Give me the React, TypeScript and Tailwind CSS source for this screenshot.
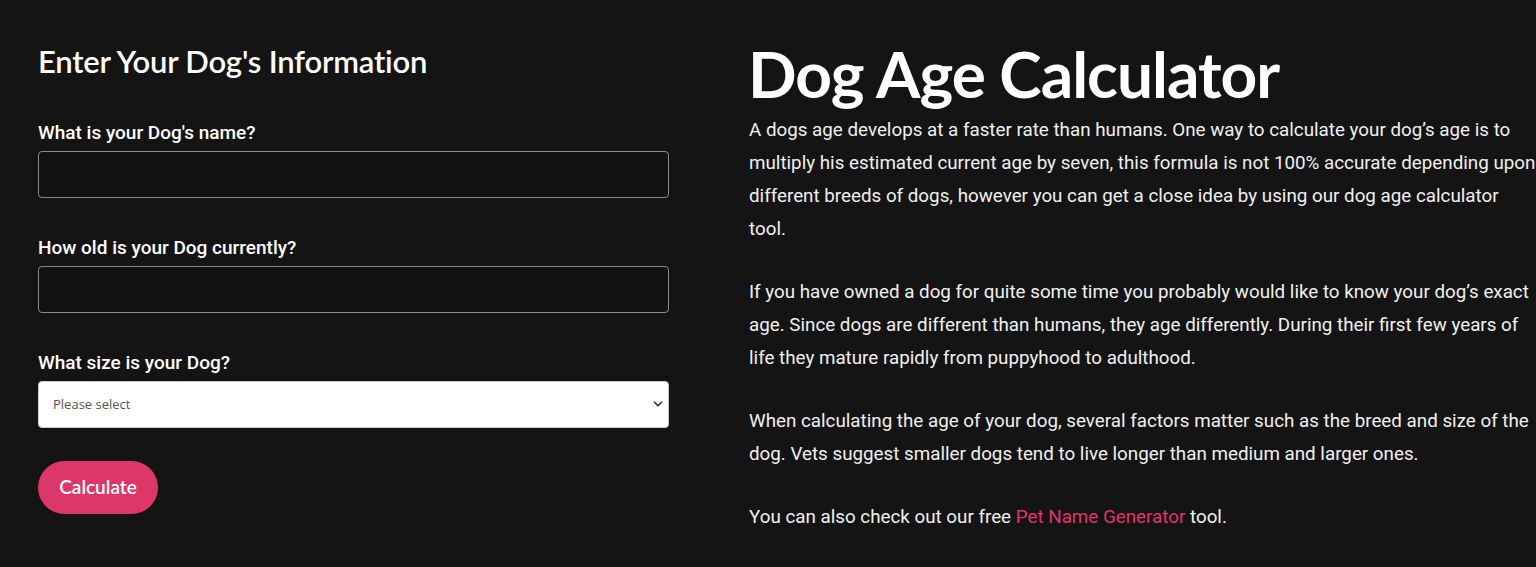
import { ChevronDown } from "lucide-react";

const paragraphs = [
  "A dogs age develops at a faster rate than humans. One way to calculate your dog’s age is to multiply his estimated current age by seven, this formula is not 100% accurate depending upon different breeds of dogs, however you can get a close idea by using our dog age calculator tool.",
  "If you have owned a dog for quite some time you probably would like to know your dog’s exact age. Since dogs are different than humans, they age differently. During their first few years of life they mature rapidly from puppyhood to adulthood.",
  "When calculating the age of your dog, several factors matter such as the breed and size of the dog. Vets suggest smaller dogs tend to live longer than medium and larger ones.",
];

function Field({ label, children }: { label: string; children: React.ReactNode }) {
  return (
    <div className="flex flex-col">
      <label className="text-[19px] font-medium leading-[22px] text-white mb-[7px] font-['Roboto',sans-serif]">
        {label}
      </label>
      {children}
    </div>
  );
}

export default function App() {
  return (
    <div className="h-[567px] w-[1536px] overflow-hidden bg-[#141414] text-white font-['Roboto',sans-serif]">
      <div className="flex gap-[80px] pl-[38px]">
        {/* Form */}
        <div className="w-[631px] shrink-0 pt-[42px]">
          <h2 className="text-[31px] font-semibold leading-[38px] font-['Lato',sans-serif] tracking-[-0.2px]">
            Enter Your Dog's Information
          </h2>
          <div className="mt-[42px] flex flex-col gap-[39px]">
            <Field label="What is your Dog's name?">
              <input className="h-[47px] w-full rounded-[4px] border border-[#8a8a8a] bg-[#121212] px-3 text-white outline-none" />
            </Field>
            <Field label="How old is your Dog currently?">
              <input className="h-[47px] w-full rounded-[4px] border border-[#8a8a8a] bg-[#121212] px-3 text-white outline-none" />
            </Field>
            <Field label="What size is your Dog?">
              <div className="relative">
                <select className="h-[47px] w-full appearance-none rounded-[4px] border border-[#ccc] bg-white pl-[14px] text-[13px] text-[#555] font-['Open_Sans',sans-serif] outline-none">
                  <option>Please select</option>
                  <option>Small</option>
                  <option>Medium</option>
                  <option>Large</option>
                </select>
                <ChevronDown
                  className="pointer-events-none absolute right-[4px] top-[16px] h-[14px] w-[14px] text-[#333]"
                  strokeWidth={3}
                />
              </div>
            </Field>
          </div>
          <button className="mt-[33px] h-[53px] w-[120px] rounded-full bg-[#dc3768] text-[19px] font-semibold text-white font-['Lato',sans-serif]">
            Calculate
          </button>
        </div>

        {/* Intro */}
        <div className="w-[790px] shrink-0 pt-[34px]">
          <h1 className="text-[64px] font-bold leading-[80px] font-['Lato',sans-serif] tracking-[-1px] -ml-[1px]">
            Dog Age Calculator
          </h1>
          <div className="flex flex-col gap-[30px]">
            {paragraphs.map((p) => (
              <p key={p.slice(0, 12)} className="text-[18.8px] leading-[33px] text-[#f0f0f0]">
                {p}
              </p>
            ))}
            <p className="text-[18.8px] leading-[33px] text-[#f0f0f0]">
              You can also check out our free{" "}
              <a href="#" className="text-[#e0336e]">
                Pet Name Generator
              </a>{" "}
              tool.
            </p>
          </div>
        </div>
      </div>
    </div>
  );
}
